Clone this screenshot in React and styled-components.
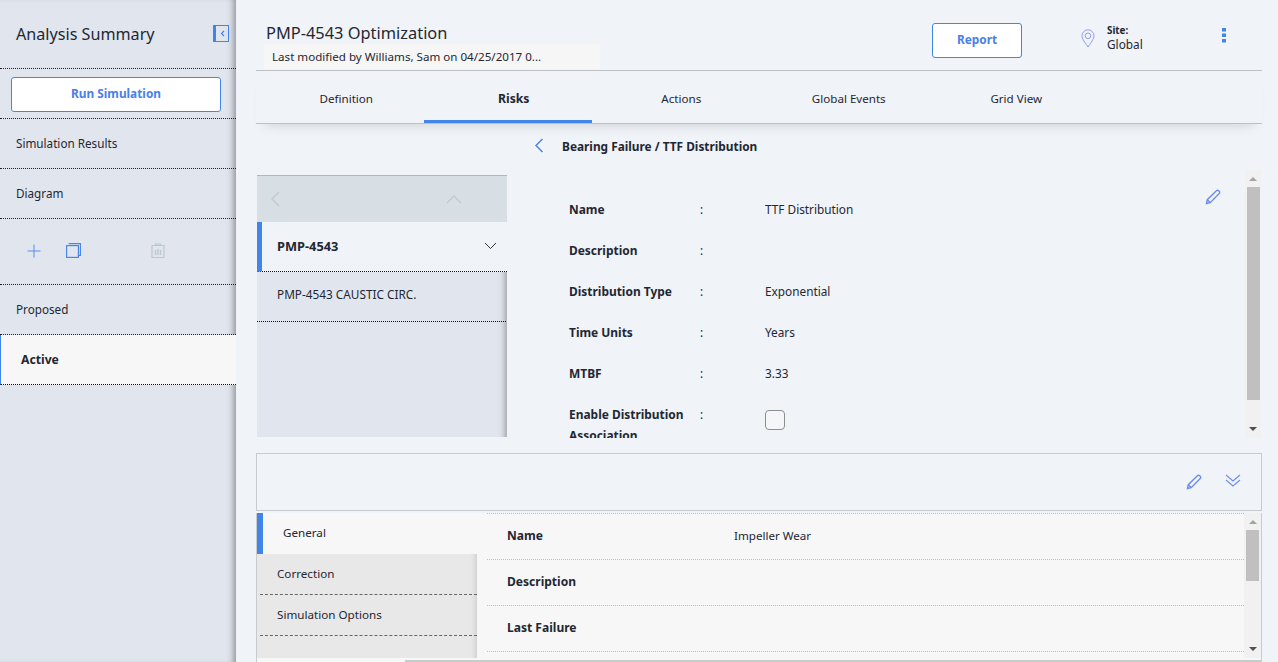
import React from "react";
import styled, {createGlobalStyle} from "styled-components";

const Global = createGlobalStyle`
  html, body {
    margin: 0;
    padding: 0;
    height: 100%;
    overflow: hidden;
  }
  body {
    font-family: "Noto Sans", "Open Sans", sans-serif;
    font-size: 12px;
    color: #1f2733;
    background: #f0f3f7;
  }
  * { box-sizing: border-box; }
`;

const BLUE = "#4285e8";

const Page = styled.div`
  display: flex;
  width: 1278px;
  height: 662px;
  overflow: hidden;
`;

/* left sidebar */
const Sidebar = styled.aside`
  width: 236px;
  flex: none;
  height: 662px;
  background: #e1e6ee;
  box-shadow: inset -7px 0 7px -5px rgba(60, 60, 60, 0.55);
`;
const SideHeader = styled.div`
  height: 69px;
  padding: 0 7px 1px 16px;
  display: flex;
  align-items: center;
  justify-content: space-between;
  border-bottom: 1px dotted #222;
`;
const SideTitle = styled.h1`
  margin: 0;
  font-size: 16.15px;
  font-weight: 400;
`;
const CollapseBtn = styled.div`
  width: 16px;
  height: 17px;
  border: 1px solid ${BLUE};
  border-left-width: 3px;
  display: flex;
  align-items: center;
  justify-content: center;
  color: ${BLUE};
`;
const SideButtonRow = styled.div`
  height: 50px;
  padding: 8px 15px 0 11px;
  border-bottom: 1px dotted #222;
`;
const OutlineButton = styled.button`
  display: block;
  width: ${(p) => p.$w};
  height: ${(p) => p.$h};
  background: #fff;
  border: 1px solid ${BLUE};
  border-radius: 3px;
  font: 700 11.85px "Noto Sans", sans-serif;
  color: #4a80e8;
  padding: 0 0 4px;
`;
const SideItem = styled.div`
  height: 50px;
  padding: 0 0 1px 16px;
  display: flex;
  align-items: center;
  font-size: 11.7px;
  border-bottom: 1px dotted #222;
`;
const SideActive = styled(SideItem)`
  padding-left: 20px;
  font-size: 12.2px;
  font-weight: 700;
  background: #f7f7f7;
  border-left: 1px solid ${BLUE};
  border-bottom: 1px dotted #111;
`;
const IconRow = styled.div`
  height: 66px;
  display: flex;
  align-items: center;
  padding: 0 0 2px 27px;
  border-bottom: 1px dotted #222;
`;
const IconSlot = styled.span`
  display: flex;
  width: ${(p) => p.$w}px;
  flex: none;
`;

/* main column */
const Main = styled.main`
  flex: 1;
  min-width: 0;
  padding: 0 16px 0 20px;
`;
const TopBar = styled.header`
  height: 71px;
  display: flex;
  border-bottom: 1px solid #bcc0c5;
`;
const TitleBlock = styled.div`
  width: 676px;
  padding: 21px 0 0 10px;
`;
const PageTitle = styled.div`
  font-size: 16.4px;
  line-height: 23px;
  height: 23px;
`;
const Modified = styled.div`
  width: 336px;
  height: 25px;
  margin-left: -2px;
  padding-left: 8px;
  background: #f6f6f6;
  font-size: 11.6px;
  line-height: 25px;
`;
const ReportSlot = styled.div`
  width: 149px;
  padding-top: 23px;
`;
const SiteBlock = styled.div`
  width: 141px;
  padding-top: 23px;
  display: flex;
  & > svg { margin-top: 6px; }
`;
const SiteText = styled.div`
  margin-left: 12px;
  line-height: 14px;
  font-size: 11.8px;
  & b {
    display: block;
    margin-top: 1px;
    font-size: 9.8px;
    line-height: 13px;
  }
`;
const MoreSlot = styled.div`
  padding-top: 28px;
  color: ${BLUE};
`;
const Tabs = styled.nav`
  height: 53px;
  display: flex;
  padding-left: 0.5px;
  border-bottom: 1px solid #bcc0c5;
  box-shadow: 0 10px 12px -9px rgba(90, 90, 90, 0.22);
`;
const Tab = styled.div`
  width: 167.5px;
  height: 52px;
  padding: 5px 0 0 12px;
  display: flex;
  align-items: center;
  justify-content: center;
  font-size: ${(p) => (p.$active ? 12.2 : 11.6)}px;
  font-weight: ${(p) => (p.$active ? 700 : 400)};
  border-bottom: 3px solid ${(p) => (p.$active ? BLUE : "transparent")};
`;
const Crumb = styled.div`
  height: 51px;
  display: flex;
  align-items: center;
  padding: 0 0 8px 278px;
  font-size: 11.85px;
  font-weight: 700;
  & svg { margin-right: 18px; }
`;

/* upper split */
const Upper = styled.section`
  display: flex;
  height: 263px;
  margin: 0 1px;
`;
const TreeNav = styled.div`
  width: 250px;
  height: 262px;
  flex: none;
  background: #e1e6ee;
  box-shadow: inset -8px 0 7px -8px rgba(70, 70, 70, 0.6);
  border-right: 1px solid #b4b7bb;
`;
const TreeHead = styled.div`
  height: 47px;
  margin-right: -1px;
  border-top: 1px solid #b4b7bb;
  background: #d7dee4;
  display: flex;
  align-items: center;
  justify-content: space-between;
  padding: 0 45px 0 13px;
`;
const TreeOpen = styled.div`
  height: 50px;
  margin-right: -1px;
  display: flex;
  align-items: center;
  justify-content: space-between;
  padding: 0 10px 1px 15px;
  background: #f0f3f7;
  border-left: 5px solid ${BLUE};
  border-bottom: 1px dotted #111;
  font-weight: 700;
  font-size: 12.8px;
`;
const TreeItem = styled.div`
  height: 50px;
  display: flex;
  align-items: center;
  padding: 0 0 5px 20px;
  font-size: 11.8px;
  border-bottom: 1px dotted #111;
`;
const Detail = styled.div`
  flex: 1;
  position: relative;
  height: 263px;
`;
const DetailClip = styled.div`
  height: 263px;
  overflow: hidden;
  padding: 24px 0 0 62px;
`;
const FieldRow = styled.div`
  display: flex;
  min-height: 41px;
  line-height: 21px;
  font-size: 11.8px;
`;
const FieldLabel = styled.div`
  width: 131px;
  flex: none;
  font-size: 11.95px;
  font-weight: 700;
`;
const FieldColon = styled.div`
  width: 65px;
  flex: none;
`;
const Check = styled.div`
  width: 20px;
  height: 20px;
  border: 1px solid #8e8e8e;
  border-radius: 4px;
  background: #f5f6f8;
  margin-top: 6px;
`;
const EditIcon = styled.div`
  position: absolute;
  top: 14px;
  right: 40px;
  color: #6c8df0;
`;

/* scrollbar, drawn since it is part of the picture */
const ScrollTrack = styled.div`
  position: absolute;
  top: ${(p) => p.$top}px;
  bottom: ${(p) => p.$bottom}px;
  right: 0;
  width: ${(p) => p.$w}px;
  background: #f1f1f1;
  display: flex;
  flex-direction: column;
  align-items: center;
  justify-content: space-between;
  padding: 7px 0;
`;
const ScrollThumb = styled.div`
  position: absolute;
  left: 2px;
  right: ${(p) => p.$right}px;
  top: ${(p) => p.$top}px;
  height: ${(p) => p.$h}px;
  background: #c0c0c0;
`;
const Arrow = styled.span`
  width: 0;
  height: 0;
  border-left: 4px solid transparent;
  border-right: 4px solid transparent;
  border-bottom: ${(p) => (p.$up ? "4px solid #a3a3a3" : "0")};
  border-top: ${(p) => (p.$up ? "0" : "4px solid #505050")};
`;

/* lower panel */
const Lower = styled.section`
  margin-top: 15px;
  height: 209px;
`;
const LowerBar = styled.div`
  height: 58px;
  border: 1px solid #c8cbce;
  display: flex;
  justify-content: flex-end;
  align-items: flex-start;
  padding: 20px 20px 0 0;
  color: #6c8df0;
  gap: 23px;
`;
const LowerBody = styled.div`
  position: relative;
  display: flex;
  height: 149px;
  margin-top: 2px;
  border-left: 1px solid #c8cbce;
  border-right: 1px solid #c8cbce;
  background: #f7f7f7;
  padding-bottom: 4px;
`;
const SubNav = styled.div`
  width: 220px;
  flex: none;
  background: #e8e8e8;
  box-shadow: inset -7px 0 6px -7px rgba(90, 90, 90, 0.3);
`;
const SubActive = styled.div`
  height: 41px;
  display: flex;
  align-items: center;
  padding-bottom: 2px;
  padding-left: 20px;
  background: #f7f7f7;
  border-left: 6px solid ${BLUE};
  font-size: 11.65px;
`;
const SubItem = styled.div`
  height: 41px;
  display: flex;
  align-items: center;
  padding: 0 0 1px 17px;
  font-size: 11.65px;
  border-bottom: 1px dashed #666;
  margin-left: 3px;
`;
const RowList = styled.div`
  flex: 1;
  margin: 0 17px 0 10px;
  border-top: 1px dotted #bdbdbd;
`;
const InfoRow = styled.div`
  height: 46px;
  display: flex;
  align-items: center;
  padding: 0 0 2px 20px;
  font-size: 11.6px;
  border-bottom: 1px dotted #bdbdbd;
`;
const InfoLabel = styled.div`
  width: 227px;
  font-size: 12.05px;
  font-weight: 700;
`;
const BottomEdge = styled.div`
  position: absolute;
  left: 148px;
  right: -1px;
  bottom: 0;
  height: 2px;
  background: #c8cbce;
`;

const Line = ({children, w, h, sw = 1, color = "currentColor"}) => (
    <svg width={w} height={h} viewBox={`0 0 ${w} ${h}`} fill="none" stroke={color} strokeWidth={sw}>
        {children}
    </svg>
);

const PencilIcon = () => (
    <Line w={16} h={16} sw={1.4}>
        <path d="M1.5 14.500l.8-3.800L11.400 1.800a1.600 1.600 0 0 1 2.300 0l.5.500a1.600 1.600 0 0 1 0 2.300L5.200 13.700z"/>
        <path d="M2.300 10.700l3 3"/>
    </Line>
);

const Scrollbar = ({top, bottom, w, thumbTop, thumbH, thumbRight}) => (
    <ScrollTrack $top={top} $bottom={bottom} $w={w}>
        <Arrow $up/>
        <ScrollThumb $top={thumbTop} $h={thumbH} $right={thumbRight}/>
        <Arrow/>
    </ScrollTrack>
);

const fields = [
    ["Name", "TTF Distribution"],
    ["Description", ""],
    ["Distribution Type", "Exponential"],
    ["Time Units", "Years"],
    ["MTBF", "3.33"],
];

export default function App() {
    return (
        <Page>
            <Global/>
            <Sidebar>
                <SideHeader>
                    <SideTitle>Analysis Summary</SideTitle>
                    <CollapseBtn>
                        <Line w={5} h={7} sw={1.2}><path d="M4 1L1.500 3.500 4 6"/></Line>
                    </CollapseBtn>
                </SideHeader>
                <SideButtonRow>
                    <OutlineButton $w="210px" $h="35px">Run Simulation</OutlineButton>
                </SideButtonRow>
                <SideItem>Simulation Results</SideItem>
                <SideItem>Diagram</SideItem>
                <IconRow>
                    <IconSlot $w={39}>
                        <Line w={14} h={14} color="#5b8def"><path d="M7 .5v13M.5 7h13"/></Line>
                    </IconSlot>
                    <IconSlot $w={85}>
                        <Line w={15} h={15} color="#4a86e8" sw={1.2}>
                            <rect x=".6" y="2.600" width="11.800" height="11.800"/>
                            <path d="M2.600 .6h11.800v11.800h-2"/>
                        </Line>
                    </IconSlot>
                    <IconSlot $w={20}>
                        <Line w={14} h={15} color="#bcc6d0" sw={1.2}>
                            <path d="M1 2.500h12v12h-12zM4.500 2.500v-1.500h5v1.500"/>
                            <path d="M4.500 7v5M7 6v6M9.500 7v5" strokeWidth="1.400"/>
                        </Line>
                    </IconSlot>
                </IconRow>
                <SideItem>Proposed</SideItem>
                <SideActive>Active</SideActive>
            </Sidebar>
            <Main>
                <TopBar>
                    <TitleBlock>
                        <PageTitle>PMP-4543 Optimization</PageTitle>
                        <Modified>Last modified by Williams, Sam on 04/25/2017 0...</Modified>
                    </TitleBlock>
                    <ReportSlot>
                        <OutlineButton $w="90px" $h="35px">Report</OutlineButton>
                    </ReportSlot>
                    <SiteBlock>
                        <Line w={14} h={19} color="#8f9cf0">
                            <path d="M7 18C4 13.500 1 10 1 6.800a6 6 0 0 1 12 0C13 10 10 13.500 7 18z"/>
                            <circle cx="7" cy="6.800" r="2.800"/>
                        </Line>
                        <SiteText>
                            <b>Site:</b>
                            Global
                        </SiteText>
                    </SiteBlock>
                    <MoreSlot>
                        <svg width="4" height="15" viewBox="0 0 4 15" fill="currentColor">
                            <rect width="4" height="3.500"/>
                            <rect y="5.500" width="4" height="3.500"/>
                            <rect y="11" width="4" height="3.500"/>
                        </svg>
                    </MoreSlot>
                </TopBar>
                <Tabs>
                    <Tab>Definition</Tab>
                    <Tab $active>Risks</Tab>
                    <Tab>Actions</Tab>
                    <Tab>Global Events</Tab>
                    <Tab>Grid View</Tab>
                </Tabs>
                <Crumb>
                    <Line w={10} h={15} color="#4a86e8" sw={1.5}><path d="M8.500 1L2 7.500 8.500 14"/></Line>
                    Bearing Failure / TTF Distribution
                </Crumb>
                <Upper>
                    <TreeNav>
                        <TreeHead>
                            <Line w={10} h={16} color="#bfc8cf" sw={1.2}><path d="M9 1L2 8l7 7"/></Line>
                            <Line w={16} h={10} color="#bfc8cf" sw={1.2}><path d="M1 9l7-7 7 7"/></Line>
                        </TreeHead>
                        <TreeOpen>
                            PMP-4543
                            <Line w={13} h={8} color="#333"><path d="M1 1l5.500 5.500L12 1"/></Line>
                        </TreeOpen>
                        <TreeItem>PMP-4543 CAUSTIC CIRC.</TreeItem>
                    </TreeNav>
                    <Detail>
                        <DetailClip>
                            {fields.map(([label, value]) => (
                                <FieldRow key={label}>
                                    <FieldLabel>{label}</FieldLabel>
                                    <FieldColon>:</FieldColon>
                                    <div>{value}</div>
                                </FieldRow>
                            ))}
                            <FieldRow>
                                <FieldLabel>Enable Distribution Association</FieldLabel>
                                <FieldColon>:</FieldColon>
                                <Check/>
                            </FieldRow>
                        </DetailClip>
                        <EditIcon><PencilIcon/></EditIcon>
                        <Scrollbar top={-5} bottom={0} w={16} thumbTop={17} thumbH={213} thumbRight={1}/>
                    </Detail>
                </Upper>
                <Lower>
                    <LowerBar>
                        <PencilIcon/>
                        <Line w={16} h={14} sw={1.1}><path d="M1 1l7 6 7-6M1 6l7 6 7-6"/></Line>
                    </LowerBar>
                    <LowerBody>
                        <SubNav>
                            <SubActive>General</SubActive>
                            <SubItem>Correction</SubItem>
                            <SubItem>Simulation Options</SubItem>
                        </SubNav>
                        <RowList>
                            <InfoRow><InfoLabel>Name</InfoLabel>Impeller Wear</InfoRow>
                            <InfoRow><InfoLabel>Description</InfoLabel></InfoRow>
                            <InfoRow><InfoLabel>Last Failure</InfoLabel></InfoRow>
                        </RowList>
                        <Scrollbar top={0} bottom={4} w={17} thumbTop={17} thumbH={51} thumbRight={2}/>
                        <BottomEdge/>
                    </LowerBody>
                </Lower>
            </Main>
        </Page>
    );
}
